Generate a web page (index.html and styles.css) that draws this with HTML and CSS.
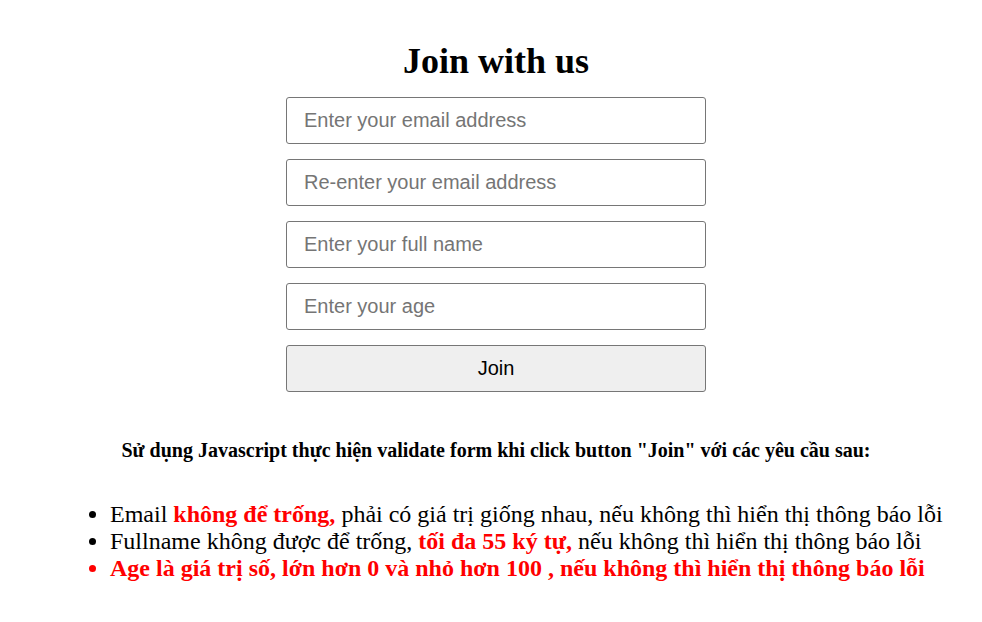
FILE: index.html
```html
<!DOCTYPE html>
<html lang="vi">
<head>
<meta charset="utf-8">
<title>Join with us</title>
<link rel="stylesheet" href="styles.css">
</head>
<body>
<main class="page">
  <form class="join-form">
    <h1 class="title">Join with us</h1>
    <input class="field" type="text" placeholder="Enter your email address">
    <input class="field" type="text" placeholder="Re-enter your email address">
    <input class="field" type="text" placeholder="Enter your full name">
    <input class="field" type="text" placeholder="Enter your age">
    <button class="join-btn" type="button">Join</button>
  </form>
  <h4 class="task">Sử dụng Javascript thực hiện validate form khi click button "Join" với các yêu cầu sau:</h4>
  <ul class="reqs">
    <li>Email <b class="red">không để trống,</b> phải có giá trị giống nhau, nếu không thì hiển thị thông báo lỗi</li>
    <li>Fullname không được để trống, <b class="red">tối đa 55 ký tự,</b> nếu không thì hiển thị thông báo lỗi</li>
    <li class="red bold">Age là giá trị số, lớn hơn 0 và nhỏ hơn 100 , nếu không thì hiển thị thông báo lỗi</li>
  </ul>
</main>
</body>
</html>
```

FILE: styles.css
```css
html, body {
  margin: 0;
  padding: 0;
  background: #ffffff;
}
body {
  font-family: "Liberation Serif", "Times New Roman", serif;
  color: #000;
}
.page {
  padding: 8px 8px 8px 18px;
}
.join-form {
  width: 420px;
  margin: 0 auto;
  display: flex;
  flex-direction: column;
  gap: 15px;
  padding-top: 33px;
}
.title {
  margin: 0;
  font-size: 36px;
  font-weight: bold;
  text-align: center;
  line-height: 41px;
}
.field, .join-btn {
  box-sizing: border-box;
  width: 420px;
  height: 47px;
  border: 1px solid #767676;
  border-radius: 3px;
  font-family: "Liberation Sans", Arial, sans-serif;
  font-size: 20px;
  margin: 0;
}
.field {
  padding: 0 17px;
  background: #fff;
  color: #000;
}
.field::placeholder {
  color: #757575;
}
.join-btn {
  background: #efefef;
  color: #000;
}
.task {
  margin: 47px 0 0 0;
  font-size: 20px;
  font-weight: bold;
  text-align: center;
}
.reqs {
  margin: 39px 0 0 0;
  padding-left: 92px;
  font-size: 24px;
}
.red {
  color: #ff0000;
}
.bold {
  font-weight: bold;
}
```
